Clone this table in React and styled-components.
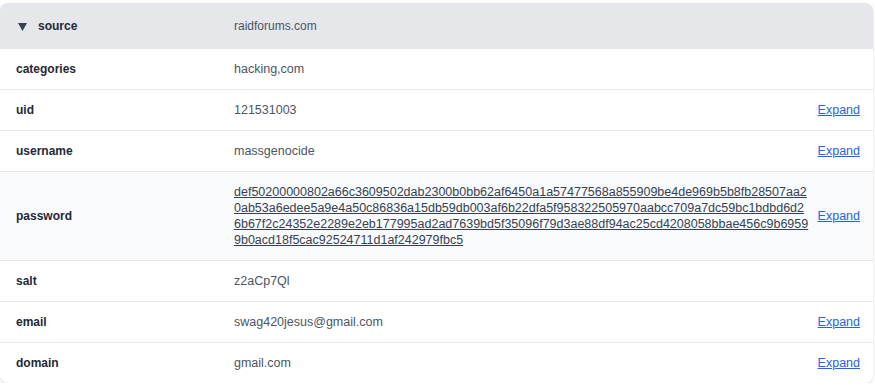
import React from "react";
import styled, { createGlobalStyle } from "styled-components";

const Global = createGlobalStyle`
  html, body { margin: 0; padding: 0; background: #ffffff; }
  body { font-family: "Liberation Sans", Arial, sans-serif; font-size: 12px; }
`;

const Page = styled.div`
  padding: 3px 2px 0 0;
`;

const Card = styled.div`
  background: #ffffff;
  border-radius: 8px;
  box-shadow: 0 1px 3px rgba(0, 0, 0, 0.12), 0 1px 2px rgba(0, 0, 0, 0.06);
  overflow: hidden;
`;

const Row = styled.div`
  display: grid;
  grid-template-columns: 234px 576px 1fr;
  align-items: center;
  background: ${(p) => (p.$head ? "#e5e7eb" : p.$alt ? "#f9fafb" : "#ffffff")};
  border-bottom: ${(p) => (p.$last || p.$head ? "none" : "1px solid #e5e7eb")};
  padding: ${(p) => (p.$head ? "15px 0" : "12px 0")};
  line-height: 16px;
`;

const Label = styled.div`
  padding-left: ${(p) => (p.$head ? "18px" : "16px")};
  font-weight: 700;
  color: #1f2937;
  display: flex;
  align-items: center;
  gap: 11px;
`;

const Value = styled.div`
  color: #4b5563;
  font-size: ${(p) => (p.$head ? "12px" : "12.5px")};
  word-break: break-all;
  min-width: 0;
`;

const LongLink = styled.a`
  color: #374151;
  text-decoration: underline;
  cursor: pointer;
`;

const Expand = styled.a`
  justify-self: end;
  padding-right: 13px;
  font-size: 12.5px;
  color: #2563eb;
  text-decoration: underline;
  cursor: pointer;
`;

const Caret = () => (
  <svg width="9" height="9" viewBox="0 0 9 9" aria-hidden="true">
    <path d="M0 1 L9 1 L4.5 9 Z" fill="#374151" />
  </svg>
);

const rows = [
  { k: "categories", v: "hacking,com" },
  { k: "uid", v: "121531003", expand: true },
  { k: "username", v: "massgenocide", expand: true },
  {
    k: "password",
    v: "def50200000802a66c3609502dab2300b0bb62af6450a1a57477568a855909be4de969b5b8fb28507aa20ab53a6edee5a9e4a50c86836a15db59db003af6b22dfa5f958322505970aabcc709a7dc59bc1bdbd6d26b67f2c24352e2289e2eb177995ad2ad7639bd5f35096f79d3ae88df94ac25cd4208058bbae456c9b69599b0acd18f5cac92524711d1af242979fbc5",
    expand: true,
    link: true,
    alt: true,
  },
  { k: "salt", v: "z2aCp7Ql" },
  { k: "email", v: "swag420jesus@gmail.com", expand: true },
  { k: "domain", v: "gmail.com", expand: true },
];

export default function App() {
  return (
    <Page>
      <Global />
      <Card>
        <Row $head>
          <Label $head>
            <Caret />
            source
          </Label>
          <Value $head>raidforums.com</Value>
          <span />
        </Row>
        {rows.map((r, i) => (
          <Row key={r.k} $alt={r.alt} $last={i === rows.length - 1}>
            <Label>{r.k}</Label>
            <Value>{r.link ? <LongLink>{r.v}</LongLink> : r.v}</Value>
            {r.expand ? <Expand>Expand</Expand> : <span />}
          </Row>
        ))}
      </Card>
    </Page>
  );
}
